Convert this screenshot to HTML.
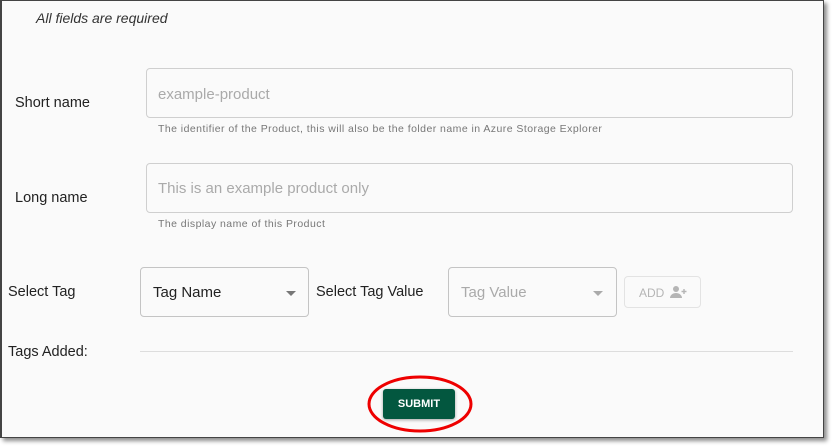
<!DOCTYPE html>
<html><head><style>
body{margin:0;width:832px;height:448px;background:#fff;position:relative;font-family:"Liberation Sans",sans-serif;overflow:hidden}
#f{position:absolute;left:0;top:0;width:821px;height:436px;background:#fafafa;border:1px solid #444;border-left-width:2px;border-top-width:1px;box-shadow:3px 3px 4px rgba(0,0,0,.45)}
.a{position:absolute;white-space:nowrap}
.in{position:absolute;border:1px solid #cfcfcf;border-radius:4px;background:#fafafa;box-sizing:border-box}
.ph{color:#aaa;font-size:15px}
.lb{color:#222;font-size:14.5px}
.hp{color:#777;font-size:10.5px;letter-spacing:.45px}
.ar{position:absolute;width:0;height:0;border-left:5px solid transparent;border-right:5px solid transparent;border-top:5px solid #777}
</style></head><body>
<div id="f"></div>
<div class="a" style="left:36px;top:10px;font-size:14px;font-style:italic;color:#333">All fields are required</div>
<div class="a lb" style="left:15px;top:95px">Short name</div>
<div class="in" style="left:146px;top:68px;width:647px;height:50px"></div>
<div class="a ph" style="left:158px;top:86px">example-product</div>
<div class="a hp" style="left:158px;top:123px">The identifier of the Product, this will also be the folder name in Azure Storage Explorer</div>
<div class="a lb" style="left:15px;top:190px">Long name</div>
<div class="in" style="left:146px;top:163px;width:647px;height:50px"></div>
<div class="a ph" style="left:158px;top:180px">This is an example product only</div>
<div class="a hp" style="left:158px;top:218px">The display name of this Product</div>
<div class="a lb" style="left:8px;top:284px">Select Tag</div>
<div class="in" style="left:140px;top:267px;width:169px;height:50px;border-color:#c4c4c4"></div>
<div class="a" style="left:153px;top:284px;font-size:15px;color:#222">Tag Name</div>
<div class="ar" style="left:286px;top:291px"></div>
<div class="a lb" style="left:316px;top:284px">Select Tag Value</div>
<div class="in" style="left:448px;top:267px;width:169px;height:50px;border-color:#c4c4c4"></div>
<div class="a ph" style="left:461px;top:284px">Tag Value</div>
<div class="ar" style="left:593px;top:291px;border-top-color:#aaa"></div>
<div class="in" style="left:624px;top:276px;width:77px;height:32px;border-color:#e3e3e3"></div>
<div class="a" style="left:639px;top:286px;font-size:12px;color:#b5b5b5">ADD</div>
<svg class="a" style="left:669px;top:284px" width="18" height="16" viewBox="0 0 18 16"><circle cx="7" cy="5" r="3" fill="#b5b5b5"/><path d="M1 14c0-3 3-5 6-5s6 2 6 5z" fill="#b5b5b5"/><path d="M15 5v5M12.5 7.5h5" stroke="#b5b5b5" stroke-width="1.4"/></svg>
<div class="a lb" style="left:8px;top:344px">Tags Added:</div>
<div class="a" style="left:140px;top:351px;width:653px;height:1px;background:#ddd"></div>
<div class="a" style="left:383px;top:389px;width:72px;height:30px;background:#03573f;border-radius:3px;box-shadow:0 1px 3px rgba(0,0,0,.35);color:#fff;font-size:11px;font-weight:bold;text-align:center;line-height:30px">SUBMIT</div>
<svg class="a" style="left:366px;top:374px" width="108" height="60"><ellipse cx="54" cy="30" rx="51" ry="27" fill="none" stroke="#e00" stroke-width="3"/></svg>
</body></html>
